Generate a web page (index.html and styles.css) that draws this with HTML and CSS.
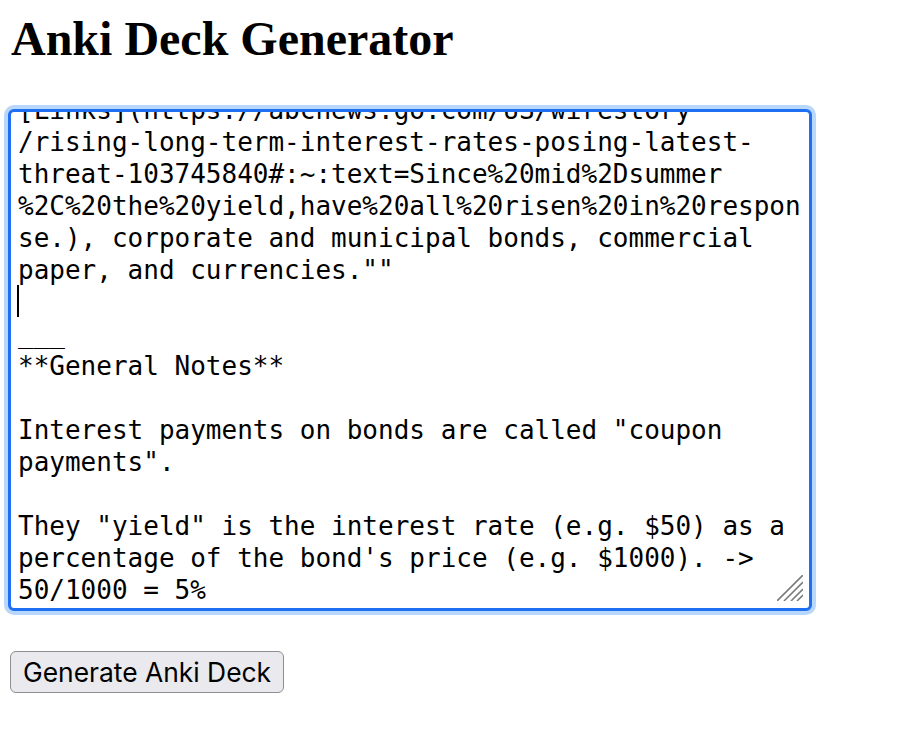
FILE: index.html
```html
<!DOCTYPE html>
<html lang="en">
<head>
<meta charset="utf-8">
<title>Anki Deck Generator</title>
<link rel="stylesheet" href="styles.css">
</head>
<body>
<div class="page">
  <h1 class="title">Anki Deck Generator</h1>
  <div class="editor">
    <textarea class="notes" spellcheck="false">""Rising rates are spreading through markets for
mortgages, auto loans and other debt ([ABC News]
[Links](https://abcnews.go.com/US/wirestory
/rising-long-term-interest-rates-posing-latest-
threat-103745840#:~:text=Since%20mid%2Dsummer
%2C%20the%20yield,have%20all%20risen%20in%20respon
se.), corporate and municipal bonds, commercial
paper, and currencies.""

___
**General Notes**

Interest payments on bonds are called "coupon
payments".

They "yield" is the interest rate (e.g. $50) as a
percentage of the bond's price (e.g. $1000). ->
50/1000 = 5%
</textarea>
    <span class="caret"></span>
    <svg class="grip" width="26" height="26" viewBox="0 0 26 26" aria-hidden="true">
      <line x1="0" y1="26" x2="26" y2="0"/>
      <line x1="7" y1="26" x2="26" y2="7"/>
      <line x1="14" y1="26" x2="26" y2="14"/>
      <line x1="20" y1="26" x2="26" y2="20"/>
    </svg>
  </div>
  <button class="generate" type="button">Generate Anki Deck</button>
</div>
<script src="script.js"></script>
</body>
</html>
```
FILE: styles.css
```css
html, body {
  margin: 0;
  background: #ffffff;
}

.page {
  display: flex;
  flex-direction: column;
  align-items: flex-start;
  padding: 11px 0 0 8px;
}

.title {
  margin: 0 0 0 3px;
  font-family: "Liberation Serif", "Times New Roman", serif;
  font-weight: 700;
  font-size: 48px;
  line-height: 56px;
  color: #000;
}

.editor {
  position: relative;
  margin-top: 42px;
  width: 804px;
  height: 502px;
}

.notes {
  display: block;
  box-sizing: border-box;
  width: 100%;
  height: 100%;
  margin: 0;
  padding: 4px 7px;
  border: 3px solid #1f6ff2;
  border-radius: 6px;
  box-shadow: 0 0 0 4px #b9d7fb;
  outline: none;
  resize: none;
  overflow: hidden;
  white-space: pre;
  font-family: "DejaVu Sans Mono", monospace;
  font-size: 26px;
  line-height: 32px;
  color: #000;
  background: #fff;
}

.caret {
  position: absolute;
  left: 9px;
  top: 176px;
  width: 2px;
  height: 32px;
  background: #000;
}

.grip {
  position: absolute;
  right: 9px;
  bottom: 10px;
  overflow: hidden;
}

.grip line {
  stroke: #7b7b7b;
  stroke-width: 1.6;
}

.generate {
  margin: 40px 0 0 2px;
  box-sizing: border-box;
  height: 42px;
  padding: 0 12px;
  border: 1.5px solid #8d8d93;
  border-radius: 6px;
  background: #e9e9ee;
  font-family: Inter, "Liberation Sans", sans-serif;
  font-size: 26.4px;
  color: #000;
}
```
FILE: script.js
```js
document.querySelector('.notes').scrollTop = 86;
```
